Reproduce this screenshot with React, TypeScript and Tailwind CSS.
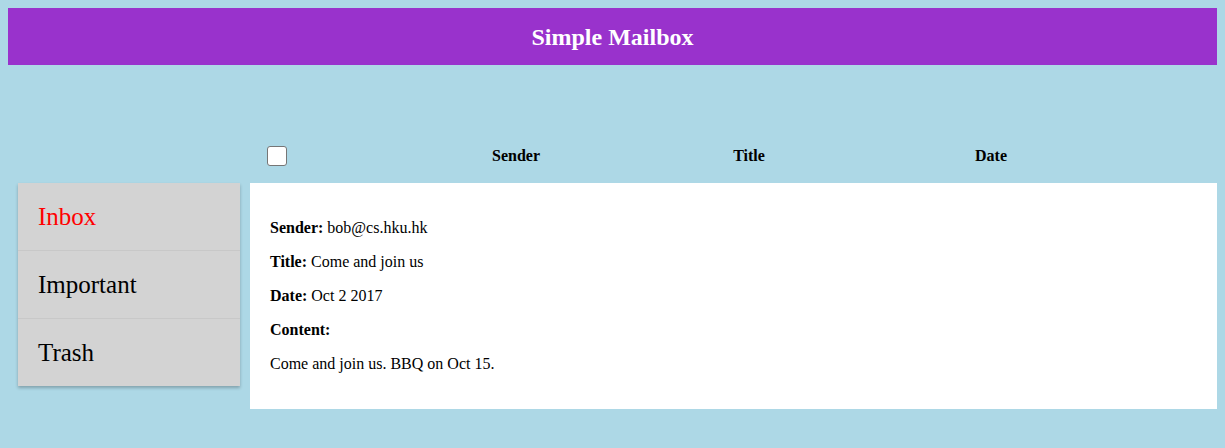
import React from 'react'

const folders = ['Inbox', 'Important', 'Trash']

export default function App() {
  return (
    <div className="min-h-[448px] bg-[#add8e6] p-2 font-['Liberation_Serif',serif] text-black">
      <div className="flex h-[57px] items-center justify-center bg-[#9932cc]">
        <h2 className="text-[24px] font-bold text-white">Simple Mailbox</h2>
      </div>

      {/* column headers */}
      <div className="mt-[75px] flex h-[43px] items-center pb-[12px] pl-[242px] text-[16px] font-bold">
        <div className="w-[150px] pl-[17px]">
          <div className="h-[20px] w-[20px] rounded-[3px] border border-[#767676] bg-white" />
        </div>
        <div className="w-[232px] text-center">Sender</div>
        <div className="w-[234px] text-center">Title</div>
        <div className="w-[250px] text-center">Date</div>
      </div>

      <div className="flex items-start">
        <div className="ml-[10px] w-[222px] bg-[#d3d3d3] shadow-[0_2px_3px_rgba(0,0,0,0.25)]">
          {folders.map((name, i) => (
            <div
              key={name}
              className={`flex items-center pl-5 text-[25px] ${i < folders.length - 1 ? 'h-[68px] border-b border-[#c8c8c8]' : 'h-[67px]'} ${i === 0 ? 'text-[#ff0000]' : 'text-black'}`}
            >
              {name}
            </div>
          ))}
        </div>

        <div className="ml-[10px] h-[226px] flex-1 bg-white px-5 pt-[36px] text-[16px] leading-[18px]">
          <p className="mb-[16px]"><b>Sender:</b> bob@cs.hku.hk</p>
          <p className="mb-[16px]"><b>Title:</b> Come and join us</p>
          <p className="mb-[16px]"><b>Date:</b> Oct 2 2017</p>
          <p className="mb-[16px]"><b>Content:</b></p>
          <p>Come and join us. BBQ on Oct 15.</p>
        </div>
      </div>
    </div>
  )
}
